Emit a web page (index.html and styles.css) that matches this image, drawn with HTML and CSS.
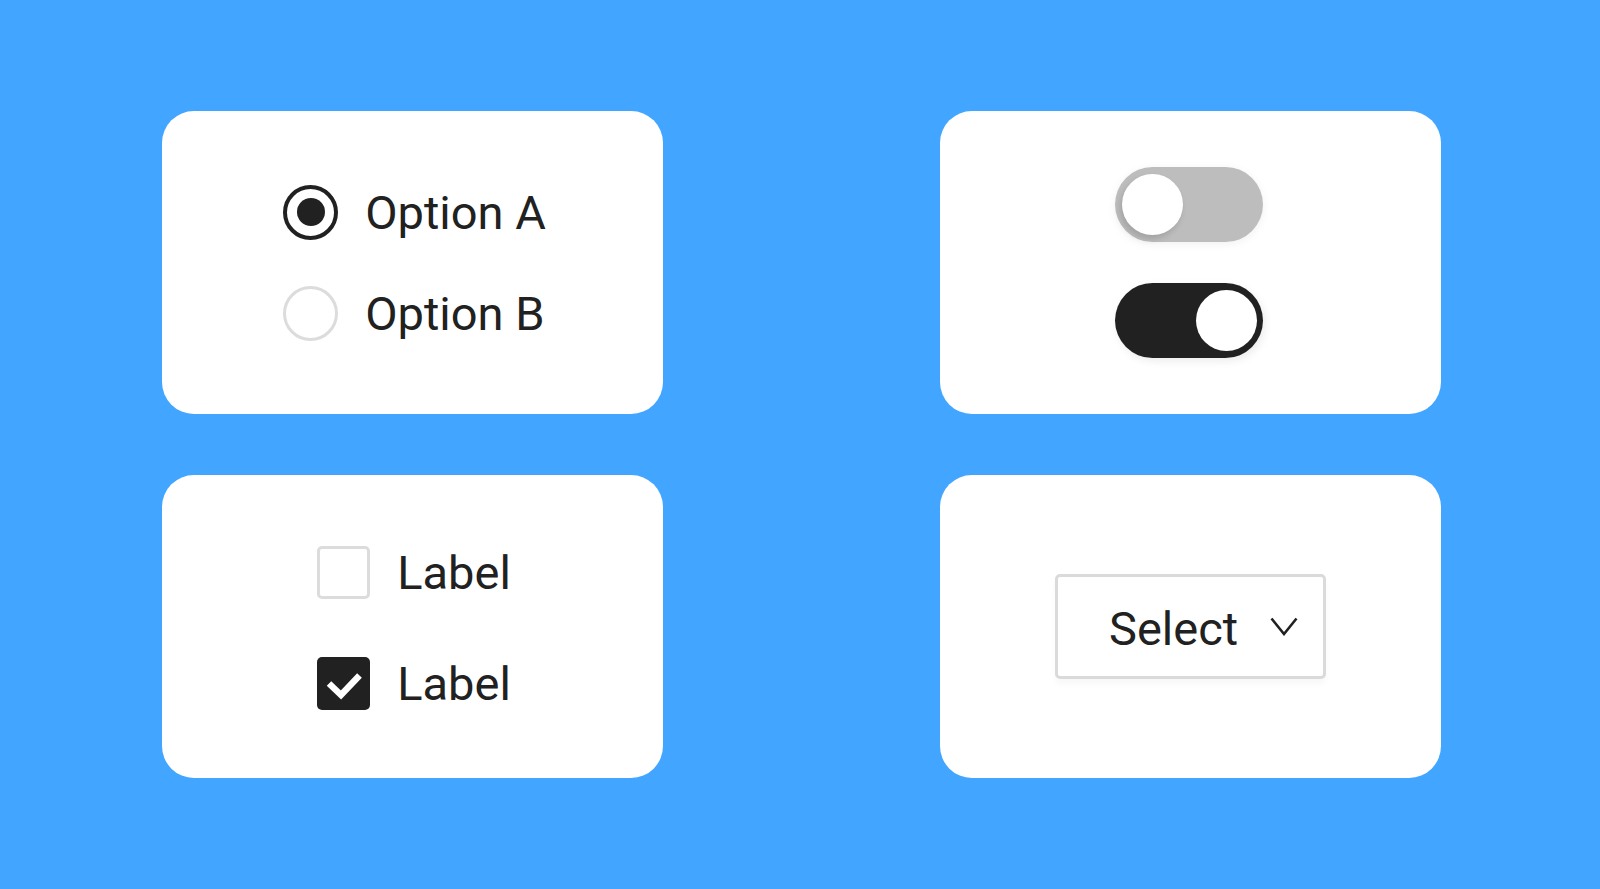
FILE: index.html
```html
<!DOCTYPE html>
<html lang="en">
<head>
<meta charset="utf-8">
<title>Form controls</title>
<link rel="stylesheet" href="styles.css">
</head>
<body>
<main class="board">
  <section class="card">
    <div class="stack stack-radio">
      <label class="row">
        <span class="radio radio-on"><span class="radio-dot"></span></span>
        <span class="text">Option A</span>
      </label>
      <label class="row">
        <span class="radio"></span>
        <span class="text">Option B</span>
      </label>
    </div>
  </section>
  <section class="card">
    <div class="stack stack-toggle">
      <span class="toggle"><span class="knob"></span></span>
      <span class="toggle toggle-on"><span class="knob"></span></span>
    </div>
  </section>
  <section class="card">
    <div class="stack stack-check">
      <label class="row">
        <span class="check"></span>
        <span class="text">Label</span>
      </label>
      <label class="row">
        <span class="check check-on">
          <svg class="tick" viewBox="0 0 53 53" width="53" height="53"><path d="M12 26.5 L24 38 L42.5 18.5" fill="none" stroke="#fff" stroke-width="6.5" stroke-linecap="butt" stroke-linejoin="miter"/></svg>
        </span>
        <span class="text">Label</span>
      </label>
    </div>
  </section>
  <section class="card">
    <div class="select">
      <span class="text">Select</span>
      <svg class="chev" viewBox="0 0 28 19" width="28" height="19"><path d="M1.5 1.5 L14 17 L26.5 1.5" fill="none" stroke="#212121" stroke-width="2.6"/></svg>
    </div>
  </section>
</main>
</body>
</html>
```

FILE: styles.css
```css
html, body {
  margin: 0;
  padding: 0;
}
body {
  background: #42a5ff;
  font-family: Roboto, "Liberation Sans", Arial, sans-serif;
  color: #212121;
  height: 889px;
  overflow: hidden;
}
.board {
  display: grid;
  grid-template-columns: 501px 501px;
  grid-template-rows: 303px 303px;
  column-gap: 277px;
  row-gap: 61px;
  justify-content: start;
  padding-top: 111px;
  padding-left: 162px;
}
.card {
  background: #fff;
  border-radius: 32px;
  display: flex;
  align-items: center;
  justify-content: center;
}
.stack {
  display: flex;
  flex-direction: column;
}
.stack-radio {
  gap: 46px;
  padding-left: 4px;
}
.stack-check {
  gap: 58px;
  padding-top: 3px;
  padding-left: 3px;
}
.stack-toggle {
  gap: 41px;
  padding-right: 4px;
}
.row {
  display: flex;
  align-items: center;
  gap: 27px;
}
.text {
  font-size: 47px;
  line-height: 1;
  letter-spacing: 0;
}
.radio {
  width: 55px;
  height: 55px;
  box-sizing: border-box;
  border-radius: 50%;
  border: 3px solid #dcdcdc;
  display: flex;
  align-items: center;
  justify-content: center;
}
.radio-on {
  border: 4px solid #212121;
}
.radio-dot {
  width: 28px;
  height: 28px;
  border-radius: 50%;
  background: #212121;
}
.check {
  width: 53px;
  height: 53px;
  box-sizing: border-box;
  border: 3px solid #dcdcdc;
  border-radius: 5px;
  display: block;
}
.check-on {
  background: #212121;
  border: none;
}
.tick {
  display: block;
}
.toggle {
  width: 148px;
  height: 75px;
  border-radius: 38px;
  background: #bdbdbd;
  box-sizing: border-box;
  padding: 7px;
  display: flex;
  justify-content: flex-start;
  box-shadow: 0 2px 10px rgba(0, 0, 0, 0.06);
}
.toggle .knob {
  width: 61px;
  height: 61px;
  border-radius: 50%;
  background: #fff;
  box-shadow: -2px 4px 6px rgba(0, 0, 0, 0.14);
}
.toggle-on {
  background: #212121;
  justify-content: flex-end;
  padding: 7px 6px 7px 7px;
  box-shadow: 2px 3px 8px rgba(0, 0, 0, 0.08);
}
.toggle-on .knob {
  box-shadow: none;
}
.select {
  width: 271px;
  height: 105px;
  box-sizing: border-box;
  border: 3px solid #dadada;
  border-radius: 5px;
  display: flex;
  align-items: center;
  padding: 4px 0 0 51px;
  box-shadow: 0 5px 6px rgba(0, 0, 0, 0.03);
}
.select .chev {
  margin-left: 32px;
  margin-top: -4px;
}
```
